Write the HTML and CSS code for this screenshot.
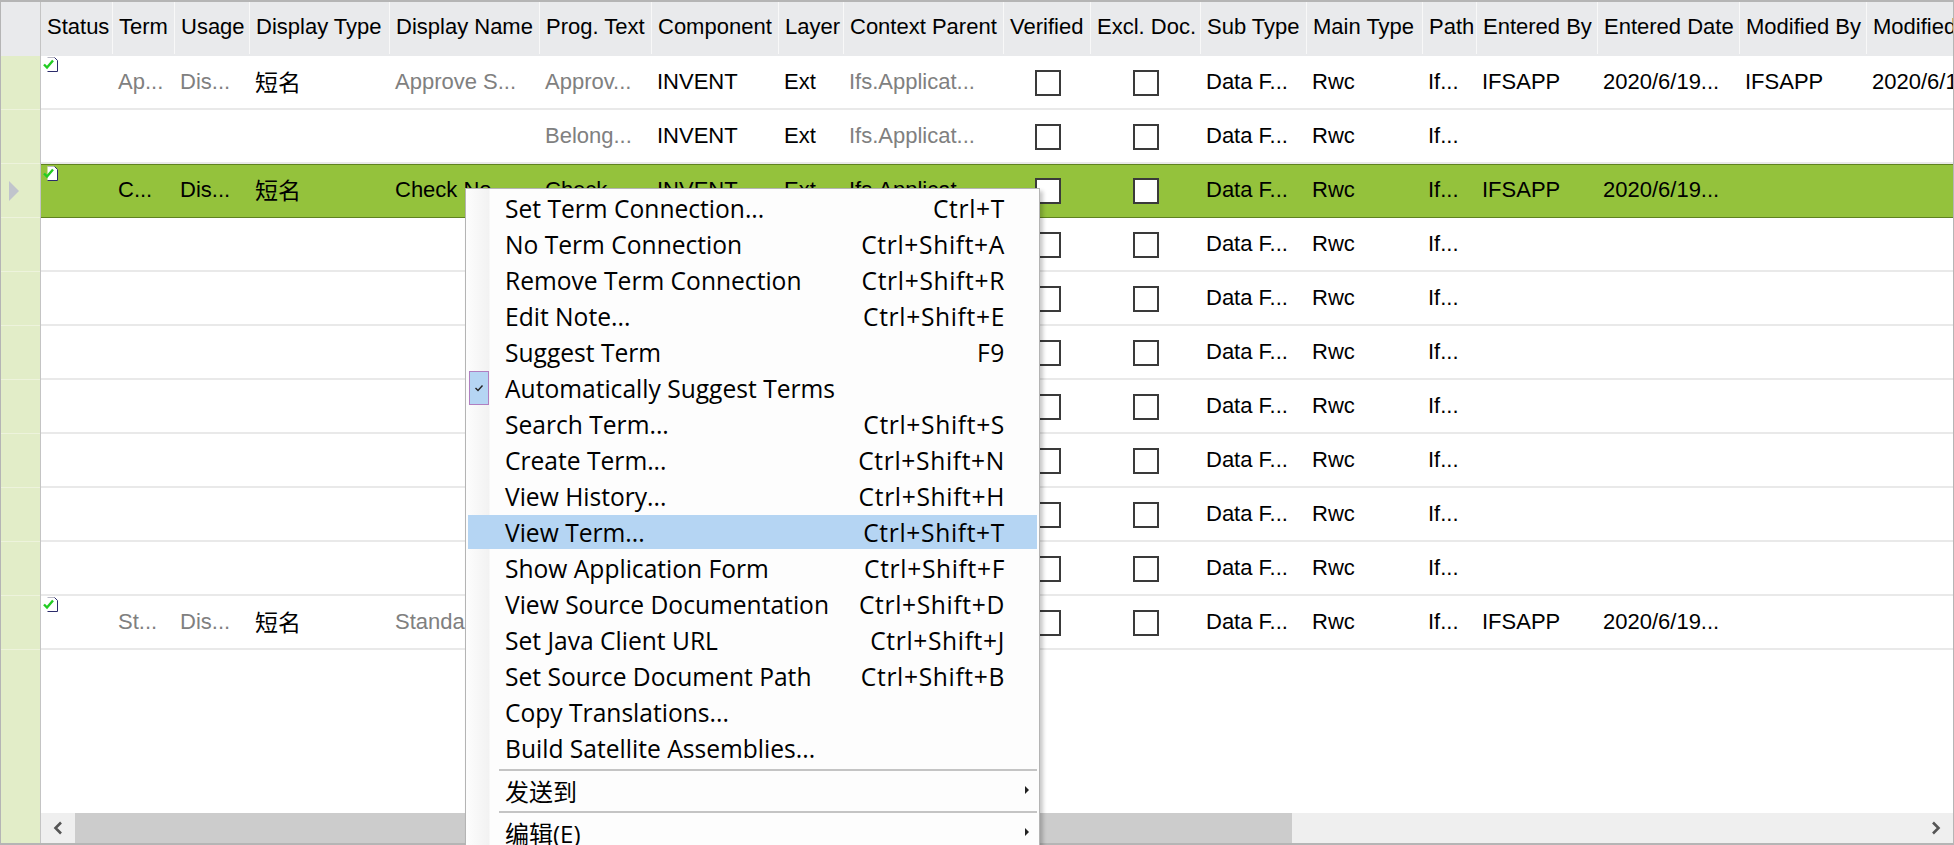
FILE: index.html
```html
<!DOCTYPE html>
<html>
<head>
    <title>Translation Terms</title>
    <link rel="stylesheet" href="styles.css">
</head>
<body>
    <svg class="defs" width="0" height="0">
        <symbol id="doc-ok" viewBox="0 0 15 15">
            <path d="M4.5 .5H11.5L14.5 3.5V14.5H4.5Z" fill="#fff"/>
            <path d="M4.5 .5H11.5" stroke="#b9b9c4" fill="none"/>
            <path d="M11.5 .5L14.5 3.5V14.5H4.5" stroke="#2b2b6b" fill="none"/>
            <path d="M1 7.5L4 10.5L10 3.5" stroke="#22cc22" stroke-width="2.4" fill="none"/>
        </symbol>
    </svg>

    <div class="frame">
        <div class="gutter">
            <div class="corner"></div>
            <div class="gutter-cell"></div>
            <div class="gutter-cell"></div>
            <div class="gutter-cell"><span class="row-arrow"></span></div>
            <div class="gutter-cell"></div>
            <div class="gutter-cell"></div>
            <div class="gutter-cell"></div>
            <div class="gutter-cell"></div>
            <div class="gutter-cell"></div>
            <div class="gutter-cell"></div>
            <div class="gutter-cell"></div>
            <div class="gutter-cell"></div>
        </div>

        <div class="pane">
            <div class="table-wrap">
                <table>
                    <colgroup>
                        <col class="c-status"><col class="c-term"><col class="c-usage"><col class="c-dtype"><col class="c-dname">
                        <col class="c-prog"><col class="c-comp"><col class="c-layer"><col class="c-ctx"><col class="c-ver">
                        <col class="c-excl"><col class="c-sub"><col class="c-main"><col class="c-path"><col class="c-eby">
                        <col class="c-edate"><col class="c-mby"><col class="c-mdate">
                    </colgroup>
                    <thead>
                        <tr>
                            <th>Status</th><th>Term</th><th>Usage</th><th>Display Type</th><th>Display Name</th>
                            <th>Prog. Text</th><th>Component</th><th>Layer</th><th>Context Parent</th><th>Verified</th>
                            <th>Excl. Doc.</th><th>Sub Type</th><th>Main Type</th><th>Path</th><th>Entered By</th>
                            <th>Entered Date</th><th>Modified By</th><th>Modified Date</th>
                        </tr>
                    </thead>
                    <tbody>
                        <tr>
                            <td class="icon-cell"><svg class="doc-icon"><use href="#doc-ok"/></svg></td>
                            <td class="dim">Ap...</td><td class="dim">Dis...</td><td class="cjk">短名</td><td class="dim">Approve S...</td>
                            <td class="dim">Approv...</td><td>INVENT</td><td>Ext</td><td class="dim">Ifs.Applicat...</td>
                            <td class="check"><span class="box"></span></td><td class="check"><span class="box"></span></td>
                            <td>Data F...</td><td>Rwc</td><td>If...</td><td>IFSAPP</td><td>2020/6/19...</td><td>IFSAPP</td><td>2020/6/19...</td>
                        </tr>
                        <tr>
                            <td></td><td></td><td></td><td></td><td></td>
                            <td class="dim">Belong...</td><td>INVENT</td><td>Ext</td><td class="dim">Ifs.Applicat...</td>
                            <td class="check"><span class="box"></span></td><td class="check"><span class="box"></span></td>
                            <td>Data F...</td><td>Rwc</td><td>If...</td><td></td><td></td><td></td><td></td>
                        </tr>
                        <tr class="selected">
                            <td class="icon-cell"><svg class="doc-icon"><use href="#doc-ok"/></svg></td>
                            <td>C...</td><td>Dis...</td><td class="cjk">短名</td><td>Check No...</td>
                            <td>Check...</td><td>INVENT</td><td>Ext</td><td>Ifs.Applicat...</td>
                            <td class="check"><span class="box"></span></td><td class="check"><span class="box"></span></td>
                            <td>Data F...</td><td>Rwc</td><td>If...</td><td>IFSAPP</td><td>2020/6/19...</td><td></td><td></td>
                        </tr>
                        <tr>
                            <td colspan="9"></td>
                            <td class="check"><span class="box"></span></td><td class="check"><span class="box"></span></td>
                            <td>Data F...</td><td>Rwc</td><td>If...</td><td colspan="4"></td>
                        </tr>
                        <tr>
                            <td colspan="9"></td>
                            <td class="check"><span class="box"></span></td><td class="check"><span class="box"></span></td>
                            <td>Data F...</td><td>Rwc</td><td>If...</td><td colspan="4"></td>
                        </tr>
                        <tr>
                            <td colspan="9"></td>
                            <td class="check"><span class="box"></span></td><td class="check"><span class="box"></span></td>
                            <td>Data F...</td><td>Rwc</td><td>If...</td><td colspan="4"></td>
                        </tr>
                        <tr>
                            <td colspan="9"></td>
                            <td class="check"><span class="box"></span></td><td class="check"><span class="box"></span></td>
                            <td>Data F...</td><td>Rwc</td><td>If...</td><td colspan="4"></td>
                        </tr>
                        <tr>
                            <td colspan="9"></td>
                            <td class="check"><span class="box"></span></td><td class="check"><span class="box"></span></td>
                            <td>Data F...</td><td>Rwc</td><td>If...</td><td colspan="4"></td>
                        </tr>
                        <tr>
                            <td colspan="9"></td>
                            <td class="check"><span class="box"></span></td><td class="check"><span class="box"></span></td>
                            <td>Data F...</td><td>Rwc</td><td>If...</td><td colspan="4"></td>
                        </tr>
                        <tr>
                            <td colspan="9"></td>
                            <td class="check"><span class="box"></span></td><td class="check"><span class="box"></span></td>
                            <td>Data F...</td><td>Rwc</td><td>If...</td><td colspan="4"></td>
                        </tr>
                        <tr>
                            <td class="icon-cell"><svg class="doc-icon"><use href="#doc-ok"/></svg></td>
                            <td class="dim">St...</td><td class="dim">Dis...</td><td class="cjk">短名</td><td class="dim">Standard...</td>
                            <td></td><td></td><td></td><td></td>
                            <td class="check"><span class="box"></span></td><td class="check"><span class="box"></span></td>
                            <td>Data F...</td><td>Rwc</td><td>If...</td><td>IFSAPP</td><td>2020/6/19...</td><td></td><td></td>
                        </tr>
                    </tbody>
                </table>
            </div>

            <div class="scrollbar">
                <div class="scroll-btn">
                    <svg width="12" height="14" viewBox="0 0 12 14"><path d="M9 1.5L3.5 7L9 12.5" stroke="#555" stroke-width="2.6" fill="none"/></svg>
                </div>
                <div class="scroll-thumb"></div>
                <div class="scroll-track"></div>
                <div class="scroll-btn">
                    <svg width="12" height="14" viewBox="0 0 12 14"><path d="M3 1.5L8.5 7L3 12.5" stroke="#555" stroke-width="2.6" fill="none"/></svg>
                </div>
            </div>
        </div>
    </div>

    <div class="menu">
        <div class="menu-item"><span>Set Term Connection...</span><span class="key">Ctrl+T</span></div>
        <div class="menu-item"><span>No Term Connection</span><span class="key">Ctrl+Shift+A</span></div>
        <div class="menu-item"><span>Remove Term Connection</span><span class="key">Ctrl+Shift+R</span></div>
        <div class="menu-item"><span>Edit Note...</span><span class="key">Ctrl+Shift+E</span></div>
        <div class="menu-item"><span>Suggest Term</span><span class="key">F9</span></div>
        <div class="menu-item">
            <span class="tick">
                <svg width="10" height="8" viewBox="0 0 10 8"><path d="M1.5 4L4 6.5L8.5 1.5" stroke="#222" stroke-width="1.4" fill="none"/></svg>
            </span>
            <span>Automatically Suggest Terms</span>
        </div>
        <div class="menu-item"><span>Search Term...</span><span class="key">Ctrl+Shift+S</span></div>
        <div class="menu-item"><span>Create Term...</span><span class="key">Ctrl+Shift+N</span></div>
        <div class="menu-item"><span>View History...</span><span class="key">Ctrl+Shift+H</span></div>
        <div class="menu-item hover"><span>View Term...</span><span class="key">Ctrl+Shift+T</span></div>
        <div class="menu-item"><span>Show Application Form</span><span class="key">Ctrl+Shift+F</span></div>
        <div class="menu-item"><span>View Source Documentation</span><span class="key">Ctrl+Shift+D</span></div>
        <div class="menu-item"><span>Set Java Client URL</span><span class="key">Ctrl+Shift+J</span></div>
        <div class="menu-item"><span>Set Source Document Path</span><span class="key">Ctrl+Shift+B</span></div>
        <div class="menu-item"><span>Copy Translations...</span></div>
        <div class="menu-item"><span>Build Satellite Assemblies...</span></div>
        <div class="menu-sep"></div>
        <div class="menu-item sub"><span>发送到</span><span class="sub-arrow"></span></div>
        <div class="menu-sep"></div>
        <div class="menu-item sub"><span>编辑(E)</span><span class="sub-arrow"></span></div>
    </div>
</body>
</html>
```

FILE: styles.css
```css
html, body {
    margin: 0;
    padding: 0;
    height: 845px;
    overflow: hidden;
    background: #fff;
}

body {
    font-family: "Liberation Sans", Arial, "Noto Sans CJK SC", sans-serif;
    font-size: 22px;
    color: #000;
}

.defs {
    display: block;
    height: 0;
}

.frame {
    display: flex;
    height: 845px;
    box-sizing: border-box;
    border: 1px solid #b5b5b5;
    border-bottom-width: 2px;
    border-top-width: 2px;
}

/* row header strip */
.gutter {
    width: 39px;
    flex: none;
    background: #e2edc8;
    border-right: 1px solid #c4c4c4;
}

.corner {
    height: 54px;
    background: #e9eaec;
}

.gutter-cell {
    height: 53px;
    border-bottom: 1px solid #edf3dc;
    display: flex;
    align-items: center;
}

.row-arrow {
    width: 0;
    height: 0;
    margin-left: 8px;
    border-left: 10px solid #c0c4cc;
    border-top: 10px solid transparent;
    border-bottom: 10px solid transparent;
}

.pane {
    flex: 1;
    min-width: 0;
    display: flex;
    flex-direction: column;
}

.table-wrap {
    flex: 1;
    min-height: 0;
    overflow: hidden;
}

table {
    table-layout: fixed;
    width: 1966px;
    border-collapse: separate;
    border-spacing: 0;
}

.c-status { width: 72px; }
.c-term { width: 62px; }
.c-usage { width: 75px; }
.c-dtype { width: 140px; }
.c-dname { width: 150px; }
.c-prog { width: 112px; }
.c-comp { width: 127px; }
.c-layer { width: 65px; }
.c-ctx { width: 160px; }
.c-ver { width: 87px; }
.c-excl { width: 110px; }
.c-sub { width: 106px; }
.c-main { width: 116px; }
.c-path { width: 54px; }
.c-eby { width: 121px; }
.c-edate { width: 142px; }
.c-mby { width: 127px; }
.c-mdate { width: 140px; }

th {
    height: 54px;
    padding: 0 0 5px 6px;
    box-sizing: border-box;
    background: #e9eaec;
    font-weight: normal;
    text-align: left;
    white-space: nowrap;
    overflow: hidden;
    box-shadow: inset -1px -3px 0 -1px #e9eaec, inset -1px 0 0 #f8f8f8;
}

td {
    height: 54px;
    padding: 0 0 0 5px;
    box-sizing: border-box;
    border-bottom: 2px solid #e9e9e9;
    white-space: nowrap;
    overflow: hidden;
}

.dim {
    color: #808080;
}

td.cjk {
    font-size: 23px;
    padding-bottom: 3px;
}

.check {
    padding: 0;
    text-align: center;
}

.box {
    display: inline-block;
    width: 26px;
    height: 26px;
    box-sizing: border-box;
    border: 2px solid #3a3a3a;
    background: #fff;
    vertical-align: middle;
}

.icon-cell {
    position: relative;
}

.doc-icon {
    position: absolute;
    left: 2px;
    top: 1px;
    width: 15px;
    height: 15px;
}

.selected td {
    background: #94c23c;
    border-top: 1px solid #5f8220;
    border-bottom: 1px solid #5f8220;
    padding-bottom: 2px;
}

.selected td.cjk {
    padding-bottom: 5px;
}

/* bottom scrollbar */
.scrollbar {
    flex: none;
    height: 30px;
    display: flex;
    background: #efefef;
}

.scroll-btn {
    width: 34px;
    flex: none;
    display: flex;
    align-items: center;
    justify-content: center;
}

.scroll-thumb {
    width: 1217px;
    flex: none;
    background: #cccccc;
}

.scroll-track {
    flex: 1;
}

/* context menu */
.menu {
    position: absolute;
    left: 465px;
    top: 188px;
    width: 575px;
    height: 680px;
    box-sizing: border-box;
    padding: 2px 2px 0;
    background: linear-gradient(to right, #fdfdfd 0, #f2f2f2 23px, #fdfdfd 24px);
    border: 1px solid #b4b4b4;
    box-shadow: 3px 3px 4px rgba(0, 0, 0, 0.22);
    font-family: "Open Sans", "Noto Sans CJK SC", sans-serif;
    font-size: 24.6px;
}

.menu-item {
    position: relative;
    height: 36px;
    display: flex;
    align-items: center;
    justify-content: space-between;
    padding: 0 32px 0 37px;
    box-sizing: border-box;
    border-bottom: 2px solid transparent;
    background-clip: padding-box;
    white-space: nowrap;
}

.key {
    letter-spacing: 0.65px;
}

.menu-item.hover {
    background-color: #b5d5f3;
}

.menu-sep {
    height: 2px;
    margin: 2px 0 2px 31px;
    background: #c4c4c4;
}

.menu-item.sub {
    font-size: 24px;
}

.sub-arrow {
    position: absolute;
    right: 8px;
    top: 13px;
    width: 0;
    height: 0;
    border-left: 4px solid #222;
    border-top: 4px solid transparent;
    border-bottom: 4px solid transparent;
}

.tick {
    position: absolute;
    left: 1px;
    top: 0;
    width: 20px;
    height: 34px;
    box-sizing: border-box;
    background: #b5d5f3;
    border: 1px solid #b07fc0;
    display: flex;
    align-items: center;
    justify-content: center;
}
```
